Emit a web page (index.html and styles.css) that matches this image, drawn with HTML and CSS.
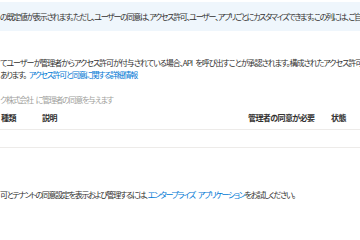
FILE: index.html
```html
<!DOCTYPE html>
<html lang="ja">
  <head>
    <meta charset="UTF-8" />
    <meta name="viewport" content="width=device-width, initial-scale=1.0" />
    <title>API のアクセス許可</title>
    <link rel="stylesheet" href="styles.css">
  </head>
  <body>
    <!-- 情報バー -->
    <div class="info-bar">
      <p>の既定値が表示されます。ただし、ユーザーの同意は、アクセス許可、ユーザー、アプリごとにカスタマイズできます。この列には、ご自分の組織の値が表示されます。</p>
    </div>

    <!-- 説明 -->
    <div class="desc">
      <p class="wide">てユーザーが管理者からアクセス許可が付与されている場合、API を呼び出すことが承認されます。構成されたアクセス許可の一覧には、アプリケーションに必要なすべてのアクセス許可が含まれている必要が</p>
      <p>あります。 <a href="#">アクセス許可と同意に関する詳細情報</a></p>
    </div>

    <div class="consent-btn">ク株式会社 に管理者の同意を与えます</div>

    <!-- アクセス許可の一覧 -->
    <div class="perm-table">
      <div class="perm-head">
        <span>種類</span>
        <span>説明</span>
        <span>管理者の同意が必要</span>
        <span>状態</span>
      </div>
      <div class="perm-empty"></div>
    </div>

    <p class="footer-note">可とテナントの同意設定を表示および管理するには、<a href="#">エンタープライズ アプリケーション</a>をお試しください。</p>
  </body>
</html>
```

FILE: styles.css
```css
body {
  margin: 0;
  padding: 0;
  background-color: white;
  color: #323130;
  font-family: "Noto Sans CJK JP", "Noto Sans", sans-serif;
  font-size: 8px;
  line-height: 12px;
  letter-spacing: -1.3px;
  word-spacing: 2.5px;
  font-feature-settings: "palt";
  overflow: hidden;
  white-space: nowrap;
}

p {
  margin: 0;
}

a {
  color: #0078d4;
  text-decoration: none;
}

/* 情報バー */
.info-bar {
  margin-top: 2px;
  padding: 9px 0 8px 0;
  background-color: #eff6fc;
  overflow: hidden;
}

/* 説明 */
.desc {
  margin-top: 26px;
  overflow: hidden;
}

.desc .wide {
  letter-spacing: -1px;
}

.consent-btn {
  margin-top: 13px;
  color: #a19f9d;
}

/* テーブル */
.perm-head {
  display: grid;
  grid-template-columns: 41px 206px 83px auto;
  padding: 6px 0 5px 1px;
  border-bottom: 1px solid #edebe9;
  font-weight: 600;
  letter-spacing: -0.6px;
}

.perm-empty {
  height: 17px;
  border-bottom: 1px solid #edebe9;
}

.footer-note {
  margin-top: 41px;
}
```
